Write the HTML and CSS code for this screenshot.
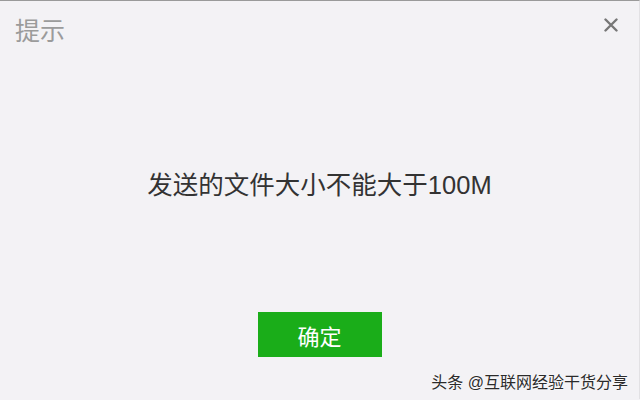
FILE: index.html
```html
<!DOCTYPE html>
<html>
<head>
  <title>提示</title>
  <link rel="stylesheet" href="styles.css">
</head>
<body>
  <div class="dialog">
    <div class="header">
      <span class="title">提示</span>
      <span class="close">
        <svg width="14" height="14" viewBox="0 0 14 14">
          <path d="M1.5 1.5 L12.5 12.5 M12.5 1.5 L1.5 12.5" stroke="#777" stroke-width="2.4" stroke-linecap="round"/>
        </svg>
      </span>
    </div>
    <div class="message">发送的文件大小不能大于100M</div>
    <div class="actions">
      <button class="ok-btn">确定</button>
    </div>
    <div class="watermark">头条 @互联网经验干货分享</div>
  </div>
</body>
</html>
```
FILE: styles.css
```css
html, body {
  margin: 0;
  padding: 0;
}

body {
  width: 640px;
  height: 400px;
  background-color: #f3f2f5;
  font-family: "Liberation Sans", "Noto Sans CJK SC", sans-serif;
  overflow: hidden;
}

.dialog {
  height: 399px;
  border-top: 1px solid #9a9a9a;
  border-right: 1px solid #e2e1e4;
  box-sizing: border-box;
  display: flex;
  flex-direction: column;
}

.header {
  display: flex;
  justify-content: space-between;
  align-items: flex-start;
  padding: 15px 21px 0 15px;
}

.title {
  font-size: 25px;
  line-height: 30px;
  color: #9b9b9b;
}

.close {
  display: flex;
  margin-top: 2px;
}

.message {
  margin-top: 121px;
  text-align: center;
  font-size: 25.5px;
  line-height: 36px;
  color: #333;
  padding-left: 0;
}

.actions {
  margin-top: 109px;
  display: flex;
  justify-content: center;
}

.ok-btn {
  width: 124px;
  height: 45px;
  border: none;
  background-color: #1aad19;
  color: #fff;
  font-family: "Liberation Sans", "Noto Sans CJK SC", sans-serif;
  font-size: 22px;
  padding: 0;
}

.watermark {
  margin-top: auto;
  align-self: flex-end;
  margin-right: 11px;
  margin-bottom: 6px;
  font-size: 16px;
  color: #2b2b2b;
  text-shadow: 0 0 2px #fff;
}
```
